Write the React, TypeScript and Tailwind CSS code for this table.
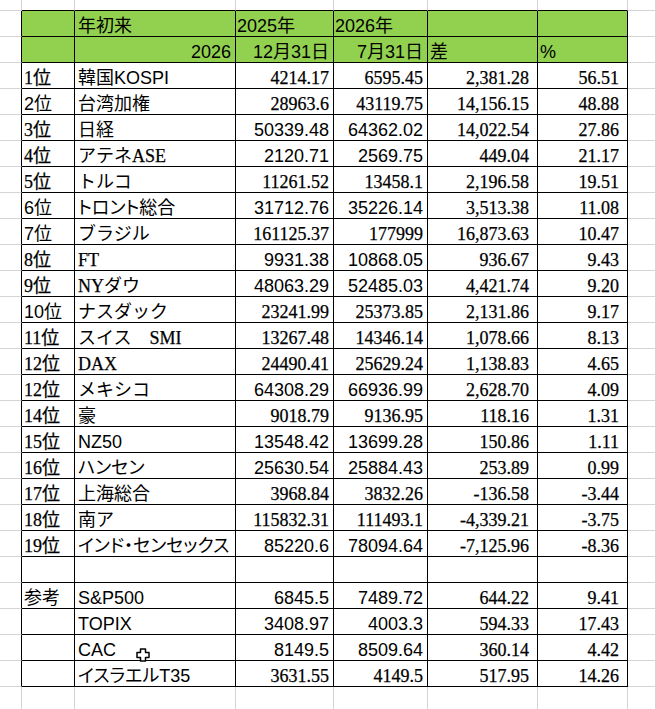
import React from 'react'

const SERIF = "font-['Liberation_Serif','Noto_Sans_CJK_JP',serif] [-webkit-text-stroke:0.25px_#000]"
const SANS = "font-['Liberation_Sans','Noto_Sans_CJK_JP',sans-serif]"
const SANS_NUM = "font-['Liberation_Sans','Noto_Sans_CJK_JP',sans-serif] text-[17px] text-[#1a1a1a]"
const PALT = "[font-feature-settings:'palt']"

type Cell = {
  text?: React.ReactNode
  font?: string
  right?: boolean
  pad?: string
}

// rank, rank font, name, col3, col3 font, col4, col4 font, diff, pct
type Row = [string, string, React.ReactNode, string, string, string, string, string, string]

const T = SERIF
const S = SANS

const Serif: React.FC<{ children: React.ReactNode }> = ({ children }) => (
  <span className={SERIF}>{children}</span>
)

const ranking: Row[] = [
  ['1位', T, '韓国KOSPI', '4214.17', T, '6595.45', T, '2,381.28', '56.51'],
  ['2位', S, '台湾加権', '28963.6', T, '43119.75', T, '14,156.15', '48.88'],
  ['3位', T, '日経', '50339.48', S, '64362.02', S, '14,022.54', '27.86'],
  ['4位', T, <>アテネ<Serif>ASE</Serif></>, '2120.71', S, '2569.75', S, '449.04', '21.17'],
  ['5位', T, 'トルコ', '11261.52', T, '13458.1', T, '2,196.58', '19.51'],
  ['6位', S, <span className={PALT}>トロント総合</span>, '31712.76', S, '35226.14', S, '3,513.38', '11.08'],
  ['7位', S, 'ブラジル', '161125.37', T, '177999', T, '16,873.63', '10.47'],
  ['8位', T, <Serif>FT</Serif>, '9931.38', S, '10868.05', S, '936.67', '9.43'],
  ['9位', T, <><Serif>NY</Serif>ダウ</>, '48063.29', S, '52485.03', S, '4,421.74', '9.20'],
  ['10位', S, 'ナスダック', '23241.99', T, '25373.85', T, '2,131.86', '9.17'],
  ['11位', T, <>スイス　<Serif>SMI</Serif></>, '13267.48', T, '14346.14', T, '1,078.66', '8.13'],
  ['12位', T, <Serif>DAX</Serif>, '24490.41', T, '25629.24', T, '1,138.83', '4.65'],
  ['12位', T, 'メキシコ', '64308.29', S, '66936.99', S, '2,628.70', '4.09'],
  ['14位', T, '豪', '9018.79', T, '9136.95', T, '118.16', '1.31'],
  ['15位', T, 'NZ50', '13548.42', S, '13699.28', S, '150.86', '1.11'],
  ['16位', T, <span className={PALT}>ハンセン</span>, '25630.54', S, '25884.43', S, '253.89', '0.99'],
  ['17位', T, '上海総合', '3968.84', T, '3832.26', T, '-136.58', '-3.44'],
  ['18位', T, '南ア', '115832.31', T, '111493.1', T, '-4,339.21', '-3.75'],
  ['19位', T, <span className={PALT}>インド・センセックス</span>, '85220.6', S, '78094.64', S, '-7,125.96', '-8.36'],
]

const reference: Row[] = [
  ['参考', S, 'S&P500', '6845.5', S, '7489.72', S, '644.22', '9.41'],
  ['', S, 'TOPIX', '3408.97', S, '4003.3', S, '594.33', '17.43'],
  ['', S, 'CAC', '8149.5', S, '8509.64', S, '360.14', '4.42'],
  ['', S, <span className={PALT}>イスラエルT35</span>, '3631.55', T, '4149.5', T, '517.95', '14.26'],
]

const num = (font: string) => (font === S ? SANS_NUM : font)

const dataRow = (r: Row): Cell[] => [
  {},
  { text: r[0], font: r[1], pad: 'pl-[2px]' },
  { text: r[2], font: S, pad: 'pl-[3px]' },
  { text: r[3], font: num(r[4]), right: true, pad: 'pr-[4px]' },
  { text: r[5], font: num(r[6]), right: true, pad: 'pr-[4px]' },
  { text: r[7], font: T, right: true, pad: 'pr-[8px]' },
  { text: r[8], font: T, right: true, pad: 'pr-[8px]' },
  {},
]

const empty = (): Cell[] => Array.from({ length: 8 }, () => ({}))

const sheet: Cell[][] = [
  empty(),
  [
    {},
    {},
    { text: '年初来', pad: 'pl-[3px]' },
    { text: '2025年', pad: 'pl-[1px]' },
    { text: '2026年', pad: 'pl-[1px]' },
    {},
    {},
    {},
  ],
  [
    {},
    {},
    { text: '2026', right: true, pad: 'pr-[4px]' },
    { text: '12月31日', right: true, pad: 'pr-[4px]' },
    { text: '7月31日', right: true, pad: 'pr-[4px]' },
    { text: '差', pad: 'pl-[2px]' },
    { text: '%', pad: 'pl-[2px]' },
    {},
  ],
  ...ranking.map(dataRow),
  empty(),
  ...reference.map(dataRow),
  empty(),
]

const LAST_TABLE_ROW = sheet.length - 2

const SheetCell: React.FC<{ cell: Cell; r: number; c: number }> = ({ cell, r, c }) => {
  const inRows = r >= 1 && r <= LAST_TABLE_ROW
  const inCols = c >= 1 && c <= 6
  const rightBlack = inRows && c <= 6
  const bottomBlack = r <= LAST_TABLE_ROW && inCols
  const green = (r === 1 || r === 2) && inCols
  return (
    <div
      className={[
        'box-border flex items-end overflow-hidden whitespace-nowrap border-r border-b text-[18px] leading-[20px] text-black',
        r === 0 ? 'h-[11px]' : 'h-[26px]',
        rightBlack ? 'border-r-black' : 'border-r-[#d4d4d4]',
        bottomBlack ? 'border-b-black' : 'border-b-[#d4d4d4]',
        green ? 'bg-[#92d050]' : 'bg-white',
        cell.right ? 'justify-end' : 'justify-start',
        cell.font ?? SANS,
        cell.pad ?? '',
      ].join(' ')}
    >
      {cell.text}
    </div>
  )
}

const PlusCursor: React.FC = () => (
  <svg
    className="absolute left-[136px] top-[648px]"
    width="14"
    height="14"
    viewBox="0 0 14 14"
  >
    <path
      d="M4.5 1h5v3.5h3.5v5h-3.5v3.5h-5v-3.5h-3.5v-5h3.5z"
      fill="#ffffff"
      stroke="#000000"
      strokeWidth="1.5"
      strokeLinejoin="round"
    />
  </svg>
)

export default function App() {
  return (
    <div className="relative h-[709px] w-[656px] overflow-hidden bg-white">
      <div className="grid grid-cols-[22px_53px_161px_98px_94px_110px_90px_1fr]">
        {sheet.map((row, r) =>
          row.map((cell, c) => <SheetCell key={`${r}-${c}`} cell={cell} r={r} c={c} />)
        )}
      </div>
      <PlusCursor />
    </div>
  )
}
